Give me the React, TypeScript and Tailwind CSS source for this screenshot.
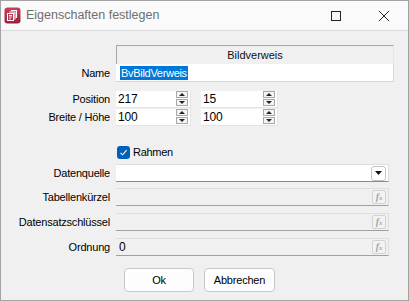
import React from "react";

const font = { fontFamily: '"Liberation Sans", Arial, sans-serif', letterSpacing: "-0.2px" };

function Spinner() {
  return (
    <div className="flex flex-col gap-[1px] pr-[2px]">
      <div className="w-[12px] h-[7px] border border-[#a8a8a8] bg-[#f4f4f4] flex items-center justify-center">
        <svg width="6" height="3" viewBox="0 0 6 3"><path d="M0 3 L3 0 L6 3 Z" fill="#222" /></svg>
      </div>
      <div className="w-[12px] h-[7px] border border-[#a8a8a8] bg-[#f4f4f4] flex items-center justify-center">
        <svg width="6" height="3" viewBox="0 0 6 3"><path d="M0 0 L6 0 L3 3 Z" fill="#222" /></svg>
      </div>
    </div>
  );
}

function SpinInput({ value, w }: { value: string; w: string }) {
  return (
    <div className={`${w} h-[17px] bg-white border-b border-r border-[#e4e4e4] flex items-center justify-between`}>
      <span className="pl-[2px] text-[12px] leading-none text-black">{value}</span>
      <Spinner />
    </div>
  );
}

function Fx() {
  return (
    <div className="w-[14px] h-[14px] mr-[2px] rounded-[2px] border border-[#d2d2d2] bg-[#f3f3f3] flex items-center justify-center">
      <span className="text-[10px] leading-none italic font-bold text-[#a6a6a6]" style={{ fontFamily: '"Liberation Serif", serif' }}>
        f<span className="text-[7px]">x</span>
      </span>
    </div>
  );
}

function Row({ label, children, mt }: { label: string; children: React.ReactNode; mt: string }) {
  return (
    <div className={`flex items-center ${mt}`}>
      <div className="w-[109px] text-right text-[11px] leading-[18px] text-black">{label}</div>
      <div className="ml-[6px]">{children}</div>
    </div>
  );
}

export default function App() {
  return (
    <div className="w-[409px] h-[301px] bg-[#f0f0f0] border border-[#a3a3a3] flex flex-col" style={font}>
      {/* Title bar */}
      <div className="h-[30px] bg-[#fafafa] border-b border-[#dadada] flex items-center shrink-0">
        <div className="ml-[3px] w-[17px] h-[17px]">
          <svg width="17" height="17" viewBox="0 0 17 17">
            <defs>
              <linearGradient id="g" x1="0" y1="0" x2="0" y2="1">
                <stop offset="0" stopColor="#c9405e" />
                <stop offset="1" stopColor="#9b1c3a" />
              </linearGradient>
            </defs>
            <rect x="0.5" y="0.5" width="16" height="16" rx="3" fill="url(#g)" />
            <path d="M7 3.5 H12.5 V11" stroke="#fff" strokeWidth="1.1" fill="none" />
            <path d="M5.5 5 H11 V12.5" stroke="#fff" strokeWidth="1.1" fill="none" />
            <rect x="3.5" y="6.5" width="6" height="7" fill="none" stroke="#fff" strokeWidth="1.1" />
            <path d="M5 8.5 H8 M5 10 H8 M5 11.8 H7" stroke="#fff" strokeWidth="0.9" />
          </svg>
        </div>
        <span className="ml-[5px] text-[12.5px] text-[#6e6e6e]" style={{ letterSpacing: "0px" }}>
          Eigenschaften festlegen
        </span>
        <div className="ml-auto flex items-center">
          <div className="w-[10px] h-[10px] border border-[#222] mr-[37px]" />
          <svg width="12" height="12" viewBox="0 0 12 12" className="mr-[18px]">
            <path d="M1 1 L11 11 M11 1 L1 11" stroke="#222" strokeWidth="1" />
          </svg>
        </div>
      </div>

      {/* Body */}
      <div className="flex flex-col">
        <div className="mt-[14px] ml-[115px] w-[278px] h-[19px] border-t border-l border-[#a6a6a6] border-r border-r-[#e6e6e6] flex items-center justify-center">
          <span className="text-[11px] text-[#111]" style={{ letterSpacing: "0px" }}>Bildverweis</span>
        </div>
        <Row label="Name" mt="mt-0">
          <div className="w-[278px] h-[18px] bg-white border-b border-r border-[#d6d6d6] flex items-center">
            <span className="ml-[4px] bg-[#0078d7] text-white text-[11px] leading-[14px] px-[1px]" style={{ letterSpacing: "-0.3px" }}>BvBildVerweis</span>
          </div>
        </Row>

        <Row label="Position" mt="mt-[8px]">
          <div className="flex gap-[10px]">
            <SpinInput value="217" w="w-[75px]" />
            <SpinInput value="15" w="w-[77px]" />
          </div>
        </Row>
        <Row label="Breite / Höhe" mt="mt-0">
          <div className="flex gap-[10px]">
            <SpinInput value="100" w="w-[75px]" />
            <SpinInput value="100" w="w-[77px]" />
          </div>
        </Row>

        <div className="mt-[17px] ml-[116px] flex items-center">
          <div className="w-[13px] h-[13px] rounded-[3px] bg-[#005fb8] flex items-center justify-center">
            <svg width="9" height="9" viewBox="0 0 9 9"><path d="M1.5 4.8 L3.6 6.8 L7.6 2.2" stroke="#fff" strokeWidth="1.1" fill="none" /></svg>
          </div>
          <span className="ml-[3px] text-[11px] leading-[18px] text-black" style={{ letterSpacing: "-0.3px" }}>Rahmen</span>
        </div>

        <Row label="Datenquelle" mt="mt-[3px]">
          <div className="w-[273px] h-[18px] bg-white border-t border-r border-[#dedede] border-b border-b-[#8a8a8a] flex items-center justify-end">
            <div className="w-[15px] h-[15px] mr-[2px] rounded-[3px] border border-[#c4c4c4] bg-white flex items-center justify-center">
              <svg width="7" height="4" viewBox="0 0 7 4"><path d="M0 0 L7 0 L3.5 4 Z" fill="#111" /></svg>
            </div>
          </div>
        </Row>
        <Row label="Tabellenkürzel" mt="mt-[6px]">
          <div className="w-[273px] h-[18px] bg-[#f0f0f0] border-t border-r border-[#dedede] border-b border-b-[#a0a0a0] flex items-center justify-end">
            <Fx />
          </div>
        </Row>
        <Row label="Datensatzschlüssel" mt="mt-[7px]">
          <div className="w-[273px] h-[18px] bg-[#f0f0f0] border-t border-r border-[#dedede] border-b border-b-[#a0a0a0] flex items-center justify-end">
            <Fx />
          </div>
        </Row>
        <Row label="Ordnung" mt="mt-[7px]">
          <div className="w-[273px] h-[18px] bg-[#f0f0f0] border-t border-r border-[#dedede] border-b border-b-[#a0a0a0] flex items-center justify-between">
            <span className="ml-[3px] text-[12px] text-black">0</span>
            <Fx />
          </div>
        </Row>

        <div className="mt-[12px] ml-[123px] flex gap-[10px]">
          <div className="w-[70px] h-[24px] rounded-[4px] border border-[#c8c8c8] bg-[#fdfdfd] flex items-center justify-center text-[11px] text-black">Ok</div>
          <div className="w-[71px] h-[24px] rounded-[4px] border border-[#c8c8c8] bg-[#fdfdfd] flex items-center justify-center text-[11px] text-black">Abbrechen</div>
        </div>
      </div>
    </div>
  );
}
